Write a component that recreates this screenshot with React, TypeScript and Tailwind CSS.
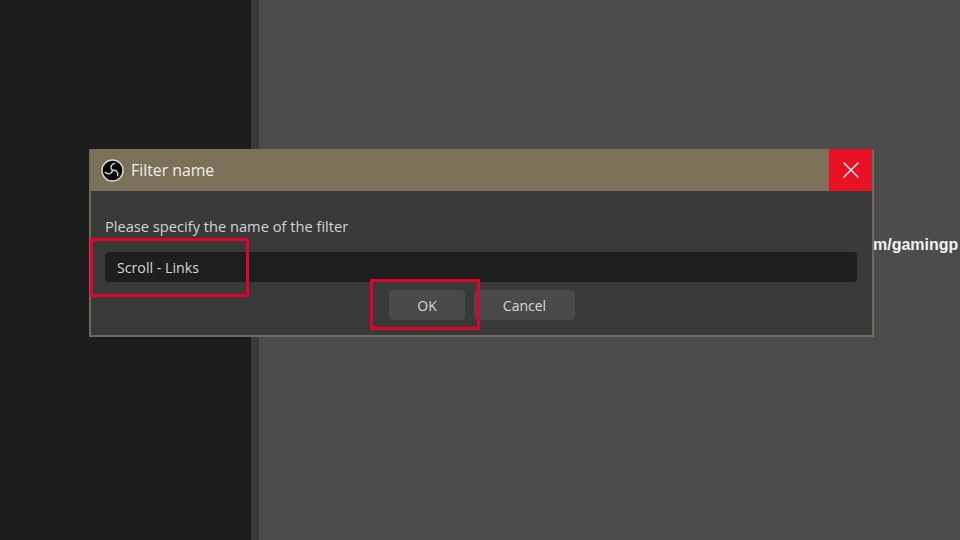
import React from 'react';
import { X } from 'lucide-react';

const BLADE = 'M12 12C9.6 9.8 9.6 6.2 14 4.6';

const ObsLogo = () => (
  <svg viewBox="0 0 24 24" className="w-[23px] h-[23px] shrink-0">
    <circle cx="12" cy="12" r="11" fill="#060606" stroke="#dcd8cd" strokeWidth="1.5" />
    <g fill="none" stroke="#d4d1c8" strokeWidth="1.5" strokeLinecap="round">
      <path d={BLADE} />
      <path d={BLADE} transform="rotate(120 12 12)" />
      <path d={BLADE} transform="rotate(240 12 12)" />
    </g>
  </svg>
);

export default function App() {
  return (
    <div className="relative w-[960px] h-[540px] overflow-hidden flex bg-[#4c4c4c] font-['Open_Sans',sans-serif]">
      {/* Background panels */}
      <div className="w-[251px] bg-[#1d1d1d]" />
      <div className="w-[8px] bg-[#3a3a3a]" />
      <div className="flex-1 pt-[232px] pl-[614px] overflow-hidden">
        <span className="font-['Liberation_Sans',sans-serif] font-bold text-[16px] text-[#f2f2f2] whitespace-nowrap">m/gamingp</span>
      </div>

      {/* Dialog */}
      <div className="absolute left-[89px] top-[149px] w-[785px] h-[188px] flex flex-col border-2 border-t-0 border-[#6f6a58] bg-[#393939]">
        <div className="h-[42px] flex items-stretch justify-between bg-[#7b7159] shrink-0">
          <div className="flex items-center gap-[7px] pl-[10px]">
            <ObsLogo />
            <span className="pt-[2px] text-[15.8px] text-[#f1eee6]">Filter name</span>
          </div>
          <div className="w-[43px] flex items-center justify-center bg-[#e81123]">
            <X className="w-[28px] h-[28px] text-white" strokeWidth={1.2} />
          </div>
        </div>
        <div className="flex-1 pl-[14px] pr-[15px] pt-[25px] flex flex-col">
          <p className="text-[14.65px] leading-[20px] text-[#d4d4d4]">Please specify the name of the filter</p>
          <div className="mt-[16px] h-[30px] rounded-[4px] bg-[#1e1e1e] flex items-center pl-[12px] pt-[2px] text-[14.2px] text-[#d8d8d8]">
            Scroll - Links
          </div>
          <div className="mt-[8px] flex justify-center gap-[9px] pl-[2px]">
            <div className="w-[76px] h-[30px] rounded-[4px] bg-[#4a4a4a] flex items-center justify-center text-[14px] text-[#d8d8d8]">OK</div>
            <div className="w-[101px] h-[30px] rounded-[4px] bg-[#4a4a4a] flex items-center justify-center text-[14px] text-[#d8d8d8]">Cancel</div>
          </div>
        </div>
      </div>

      {/* Red annotation boxes */}
      <div className="absolute left-[90px] top-[238px] w-[159px] h-[59px] border-[3px] border-[#e4002b]" />
      <div className="absolute left-[370px] top-[279px] w-[110px] h-[51px] border-[3px] border-[#e4002b]" />
    </div>
  );
}
